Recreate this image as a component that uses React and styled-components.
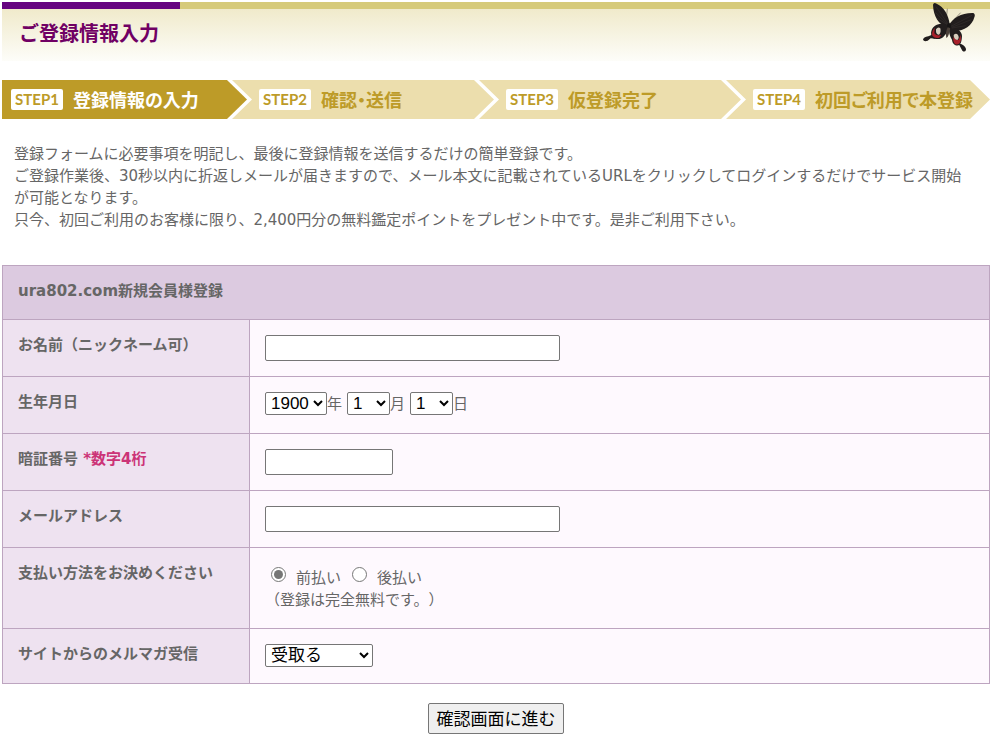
import React from "react";
import styled, { createGlobalStyle } from "styled-components";

const GlobalStyle = createGlobalStyle`
  * { box-sizing: border-box; }
  body {
    margin: 0;
    padding: 2px 17px 3px 2px;
    background: #fff;
    color: #666;
    font-family: "DejaVu Sans", "Noto Sans CJK JP", sans-serif;
    font-size: 15px;
    line-height: 22px;
    text-spacing-trim: space-all;
  }
`;

const Header = styled.header`
  position: relative;
  height: 59px;
  border-top: 7px solid #d6ca79;
  background: linear-gradient(#f0eacb, #fdfdf9);
  &::before {
    content: "";
    position: absolute;
    top: -7px;
    left: 0;
    width: 178px;
    height: 7px;
    background: #660480;
  }
`;

const Title = styled.h1`
  margin: 0;
  padding: 9px 17px;
  color: #700064;
  font-family: "Noto Sans CJK JP", sans-serif;
  font-size: 20px;
  font-weight: 700;
  line-height: 30px;
`;

const ButterflyArt = styled.svg`
  position: absolute;
  top: -9px;
  right: 12px;
  width: 58px;
  height: 55px;
`;

const Steps = styled.ol`
  display: grid;
  grid-template-columns: repeat(4, 1fr);
  margin: 19px 0 0;
  padding: 0;
  list-style: none;
`;

const Step = styled.li`
  display: flex;
  align-items: center;
  gap: 10px;
  height: 39px;
  padding-left: 27px;
  margin-left: -17px;
  background: #ecdead;
  color: #bd9b28;
  font-family: "Noto Sans CJK JP", sans-serif;
  font-feature-settings: "palt";
  font-size: 18px;
  font-weight: 700;
  line-height: 22px;
  white-space: nowrap;
  clip-path: polygon(0 0, calc(100% - 22px) 0, calc(100% - 2px) 50%, calc(100% - 22px) 100%, 0 100%, 20px 50%);
  &:first-child {
    margin-left: 0;
    padding-left: 9px;
    background: #bd9b28;
    color: #fff;
    clip-path: polygon(0 0, calc(100% - 22px) 0, calc(100% - 2px) 50%, calc(100% - 22px) 100%, 0 100%);
  }
  &:last-child {
    clip-path: polygon(0 0, calc(100% - 20px) 0, 100% 50%, calc(100% - 20px) 100%, 0 100%, 20px 50%);
  }
`;

const StepName = styled.span`
  padding-bottom: 2px;
`;

const Badge = styled.span`
  width: 52px;
  height: 21px;
  border-radius: 2px;
  background: #fff;
  color: #bd9b28;
  font-family: Lato, sans-serif;
  font-size: 15px;
  font-weight: 700;
  line-height: 21px;
  text-align: center;
`;

const Intro = styled.p`
  margin: 0;
  padding: 24px 16px 34px 12px;
`;

const FormTable = styled.table`
  width: 100%;
  border-collapse: collapse;
  table-layout: fixed;
`;

const LabelCol = styled.col`
  width: 247px;
`;

const Row = styled.tr`
  height: ${(p) => p.$height || 57}px;
`;

const HeadCell = styled.th`
  padding: 14px 15px;
  border: 1px solid #bda5c0;
  background: ${(p) => (p.$title ? "#dccae0" : "#eee2f0")};
  font-weight: 700;
  text-align: left;
  vertical-align: top;
`;

const Cell = styled.td`
  padding: 15px;
  border: 1px solid #bda5c0;
  background: #fef9fe;
  vertical-align: top;
`;

const Note = styled.span`
  color: #cc3377;
`;

const TextInput = styled.input`
  display: block;
  width: ${(p) => p.$width}px;
  height: 26px;
  border: 1px solid #767676;
  border-radius: 2px;
  background: #fff;
  font-size: 17px;
`;

const Fields = styled.div`
  display: flex;
  align-items: center;
  gap: ${(p) => p.$gap || 0}px;
`;

const DatePart = styled.label`
  display: flex;
  align-items: center;
`;

const SelectBox = styled.select`
  display: block;
  width: ${(p) => p.$width}px;
  height: 23px;
  padding: 0 1px;
  border: 1px solid #767676;
  border-radius: 2px;
  background: #fff;
  color: #000;
  font-family: "Liberation Sans", "Noto Sans CJK JP", sans-serif;
  font-size: 17px;
`;

const Choice = styled.label`
  display: flex;
  gap: 10px;
  padding-top: 4px;
`;

const Radio = styled.input`
  width: 15px;
  height: 15px;
  margin: 0;
  accent-color: #767676;
`;

const Choices = styled(Fields)`
  padding-left: 6px;
`;

const Actions = styled.div`
  display: flex;
  justify-content: center;
  padding-top: 19px;
`;

const SubmitButton = styled.button`
  width: 136px;
  height: 31px;
  padding: 0 0 2px;
  border: 1px solid #767676;
  border-radius: 2px;
  background: #efefef;
  color: #000;
  font-family: "Liberation Sans", "Noto Sans CJK JP", sans-serif;
  font-size: 17px;
`;

const steps = ["登録情報の入力", "確認・送信", "仮登録完了", "初回ご利用で本登録"];

function Butterfly() {
  return (
    <ButterflyArt viewBox="120 0 174 165" aria-hidden="true">
      <g fill="none" stroke="#6b6557" strokeWidth="2">
        <path d="M203 72 Q197 48 202 26" />
        <path d="M210 72 Q226 55 242 38" />
      </g>
      <path d="M203 80 C176 76 160 48 159 14 Q161 6 170 11 C192 20 206 46 209 72 Z" fill="#211d1d" />
      <path d="M207 76 C218 54 244 38 280 39 Q287 43 283 52 C276 80 244 98 214 92 Z" fill="#211d1d" />
      <path d="M205 74 C180 66 160 75 155 90 C151 100 154 108 158 113 C167 120 186 119 193 107 C201 99 207 88 205 74 Z" fill="#211d1d" />
      <path d="M209 80 C231 82 246 94 246 108 C245 122 244 131 236 136 C226 138 217 131 216 119 C209 106 205 96 209 80 Z" fill="#211d1d" />
      <path d="M160 103 L145 109 Q130 112 129 119 Q132 126 143 122 L152 115 L166 116 Z" fill="#211d1d" />
      <path d="M235 130 L245 133 Q259 141 258 150 Q254 158 247 152 L241 141 Z" fill="#211d1d" />
      <path d="M164 83 Q153 97 157 107 Q165 117 178 113 L184 105 Q168 109 163 100 Z" fill="#a8202a" />
      <path d="M220 111 Q218 126 226 133 Q239 136 243 121 L242 105 L236 119 Q226 122 220 111 Z" fill="#a8202a" />
      <path d="M168 88 Q174 79 181 85 Q184 98 177 104 Q167 105 168 88 Z" fill="#d7cdbd" />
      <path d="M221 105 Q228 98 234 105 Q239 114 232 120 Q221 119 221 105 Z" fill="#d7cdbd" />
      <g fill="none" stroke="#463f3c" strokeWidth="1">
        <path d="M204 72 L168 20 M203 73 L166 37 M202 74 L171 55 M213 79 L276 46 M215 82 L274 59 M216 84 L257 77" />
      </g>
      <ellipse cx="207" cy="77" rx="6" ry="8" fill="#171515" />
      <path d="M203 82 Q195 99 199 114 Q207 111 210 84 Z" fill="#4a4039" />
    </ButterflyArt>
  );
}

export default function App() {
  return (
    <>
      <GlobalStyle />
      <Header>
        <Title>ご登録情報入力</Title>
        <Butterfly />
      </Header>
      <Steps>
        {steps.map((name, i) => (
          <Step key={name}>
            <Badge>STEP{i + 1}</Badge>
            <StepName>{name}</StepName>
          </Step>
        ))}
      </Steps>
      <Intro>
        登録フォームに必要事項を明記し、最後に登録情報を送信するだけの簡単登録です。
        <br />
        ご登録作業後、30秒以内に折返しメールが届きますので、メール本文に記載されているURLをクリックしてログインするだけでサービス開始が可能となります。
        <br />
        只今、初回ご利用のお客様に限り、2,400円分の無料鑑定ポイントをプレゼント中です。是非ご利用下さい。
      </Intro>
      <form onSubmit={(e) => e.preventDefault()}>
        <FormTable>
          <colgroup>
            <LabelCol />
            <col />
          </colgroup>
          <tbody>
            <Row $height={54}>
              <HeadCell $title colSpan={2}>ura802.com新規会員様登録</HeadCell>
            </Row>
            <Row>
              <HeadCell scope="row"><label htmlFor="name">お名前（ニックネーム可）</label></HeadCell>
              <Cell><TextInput id="name" type="text" $width={295} /></Cell>
            </Row>
            <Row>
              <HeadCell scope="row">生年月日</HeadCell>
              <Cell>
                <Fields $gap={5}>
                  <DatePart><SelectBox $width={62}><option>1900</option></SelectBox>年</DatePart>
                  <DatePart><SelectBox $width={43}><option>1</option></SelectBox>月</DatePart>
                  <DatePart><SelectBox $width={43}><option>1</option></SelectBox>日</DatePart>
                </Fields>
              </Cell>
            </Row>
            <Row>
              <HeadCell scope="row"><label htmlFor="pin">暗証番号 <Note>*数字4桁</Note></label></HeadCell>
              <Cell><TextInput id="pin" type="text" $width={128} /></Cell>
            </Row>
            <Row>
              <HeadCell scope="row"><label htmlFor="mail">メールアドレス</label></HeadCell>
              <Cell><TextInput id="mail" type="email" $width={295} /></Cell>
            </Row>
            <Row $height={81}>
              <HeadCell scope="row">支払い方法をお決めください</HeadCell>
              <Cell>
                <Choices $gap={11}>
                  <Choice><Radio type="radio" name="payment" defaultChecked />前払い</Choice>
                  <Choice><Radio type="radio" name="payment" />後払い</Choice>
                </Choices>
                （登録は完全無料です。）
              </Cell>
            </Row>
            <Row $height={55}>
              <HeadCell scope="row"><label htmlFor="magazine">サイトからのメルマガ受信</label></HeadCell>
              <Cell><SelectBox id="magazine" $width={108}><option>受取る</option></SelectBox></Cell>
            </Row>
          </tbody>
        </FormTable>
        <Actions>
          <SubmitButton type="submit">確認画面に進む</SubmitButton>
        </Actions>
      </form>
    </>
  );
}
